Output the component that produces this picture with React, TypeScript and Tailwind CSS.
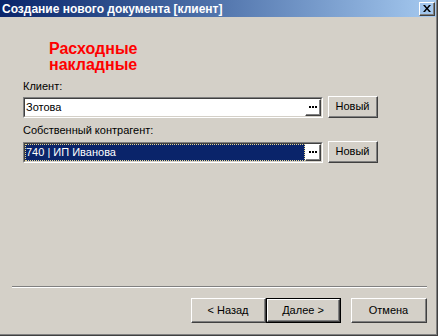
import React from "react";

const font = { fontFamily: '"Liberation Sans", Arial, sans-serif' };

function Raised({ children, className = "", def = false }: { children: React.ReactNode; className?: string; def?: boolean }) {
  const inner = (
    <div className="flex h-full w-full border-t border-l border-t-white border-l-white border-b border-r border-b-[#404040] border-r-[#404040]">
      <div className="flex h-full w-full items-center justify-center border-b border-r border-b-[#808080] border-r-[#808080] text-[11px] text-black">
        {children}
      </div>
    </div>
  );
  if (def) return <div className={`border border-black ${className}`}>{inner}</div>;
  return <div className={className}>{inner}</div>;
}

function Dots() {
  return (
    <div className="flex gap-[1px]">
      <span className="h-[2px] w-[2px] bg-black" />
      <span className="h-[2px] w-[2px] bg-black" />
      <span className="h-[2px] w-[2px] bg-black" />
    </div>
  );
}

function Field({ value, selected = false }: { value: string; selected?: boolean }) {
  return (
    <div className="flex items-center gap-[5px]">
      <div className="h-[21px] w-[300px] border-t border-l border-t-[#808080] border-l-[#808080] border-b border-r border-b-white border-r-white">
        <div className="flex h-full w-full border-t border-l border-t-[#404040] border-l-[#404040] border-b border-r border-b-[#d4d0c8] border-r-[#d4d0c8] bg-white">
          <div
            className={`flex flex-1 items-center pl-[1px] text-[11px] ${
              selected ? "bg-[#0a246a] text-white outline-1 outline-dotted outline-offset-[-1px] outline-[#e8d890]" : "text-black"
            }`}
          >
            {value}
          </div>
          <Raised className="h-full w-[16px]">
            <Dots />
          </Raised>
        </div>
      </div>
      <Raised className="h-[22px] w-[50px]">Новый</Raised>
    </div>
  );
}

export default function App() {
  return (
    <div style={font} className="h-[336px] w-[438px] border-b border-r border-b-[#404040] border-r-[#404040]">
      <div className="flex h-full w-full flex-col border-b border-r border-b-[#808080] border-r-[#808080] bg-[#d4d0c8]">
        <div className="flex h-[17px] items-center justify-between bg-gradient-to-r from-[#0a246a] to-[#a6caf0] pl-[2px] pr-[1px]">
          <span className="text-[12px] font-bold leading-none text-white">Создание нового документа [клиент]</span>
          <Raised className="h-[14px] w-[16px]">
            <svg width="8" height="7" viewBox="0 0 8 7">
              <path d="M0 0h2l2 2.5L6 0h2L5 3.5 8 7H6L4 4.5 2 7H0l3-3.5z" fill="black" />
            </svg>
          </Raised>
        </div>

        <div className="flex flex-1 flex-col pl-[23px]">
          <div className="mt-[24px] pl-[26px] text-[16px] font-bold leading-[16px] text-[#ff0000]">
            Расходные
            <br />
            накладные
          </div>
          <div className="mt-[7px] text-[11px] leading-[13px] text-black">Клиент:</div>
          <div className="mt-[3px]">
            <Field value="Зотова" />
          </div>
          <div className="mt-[6px] text-[11px] leading-[13px] text-black">Собственный контрагент:</div>
          <div className="mt-[4px]">
            <Field value="740 | ИП Иванова" selected />
          </div>
        </div>

        <div className="ml-[12px] mr-[9px] border-t border-b border-t-[#808080] border-b-white" />
        <div className="mb-[11px] mt-[10px] flex justify-end pr-[9px]">
          <Raised className="h-[25px] w-[75px]">&lt; Назад</Raised>
          <Raised def className="h-[25px] w-[75px]">Далее &gt;</Raised>
          <Raised className="ml-[10px] h-[25px] w-[76px]">Отмена</Raised>
        </div>
      </div>
    </div>
  );
}
